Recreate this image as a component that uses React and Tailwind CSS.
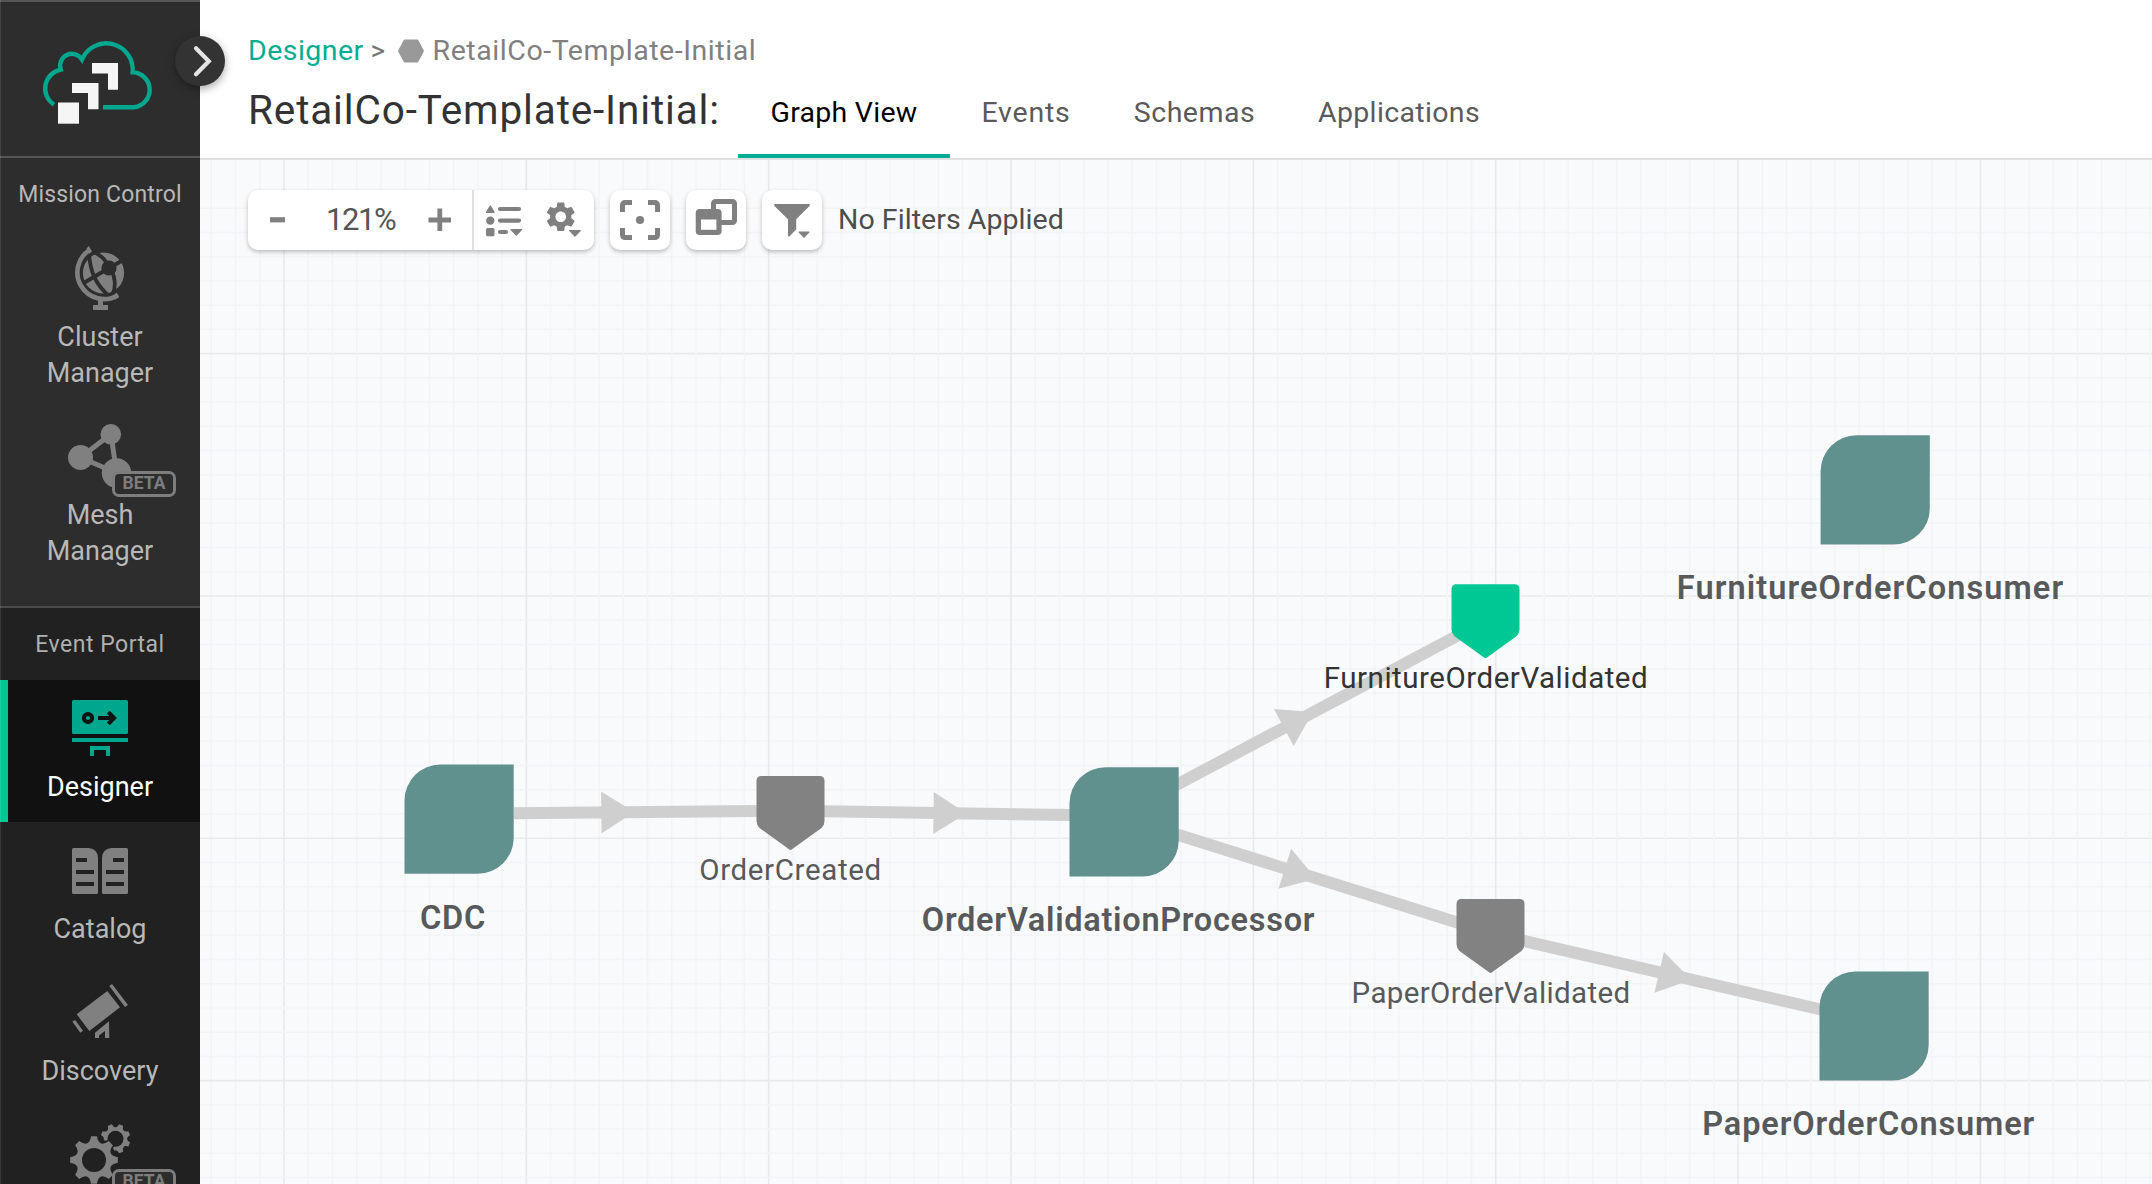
import { MdSettings } from 'react-icons/md';

/* ---------- helpers ---------- */

function gearPath(cx, cy, teeth, outer, control, half, offset = 0) {
  const pt = (a, r) => `${(cx + r * Math.sin(a)).toFixed(2)} ${(cy - r * Math.cos(a)).toFixed(2)}`;
  const step = (2 * Math.PI) / teeth;
  let d = `M${pt(offset - half, outer)}`;
  for (let i = 0; i < teeth; i++) {
    const a = offset + i * step;
    d += ` L${pt(a + half, outer)} Q${pt(a + step / 2, control)} ${pt(a + step - half, outer)}`;
  }
  return d + 'Z';
}

/* ---------- sidebar icons ---------- */

function CloudLogo() {
  return (
    <svg className="h-[90px] w-[116px]" viewBox="40 38 116 90" fill="none">
      <path
        d="M54 104.6 A19.2 19.2 0 0 1 60.8 69.6 A11.8 11.8 0 0 1 82 59.5 A26.4 26.4 0 0 1 132.6 72.3 A17.5 17.5 0 0 1 134 107.2 H103"
        stroke="#00a78f"
        strokeWidth="4.4"
      />
      <g fill="#f5f5f5">
        <path d="M92 63H118V89.7H108V73.5H92Z" />
        <path d="M72 83H98.5V109.3H88V93H72Z" />
        <path d="M58 102.5H79V123.7H58Z" />
      </g>
    </svg>
  );
}

function GlobeIcon() {
  return (
    <svg className="-my-[4px] h-[64px] w-[56px]" viewBox="72 246 56 64" fill="none">
      <circle cx="103.5" cy="273" r="20.6" fill="#808080" />
      <g stroke="#2d2d2d" strokeWidth="3.8">
        <path d="M89 253C90 272 96 285 110 297" />
        <path d="M109 268L82 284" />
        <path d="M109 268L126 258.5" />
        <path d="M109 268C106 259 101 256 94 252" />
        <path d="M111 269C116 279 116 288 112 296" />
      </g>
      <circle cx="109" cy="268" r="7.6" fill="#2d2d2d" />
      <path d="M90.2 249.6A26.6 26.6 0 1 0 118 295.2" stroke="#808080" strokeWidth="4.6" />
      <path d="M86.5 248.5L88.8 246L92 251.5L89 254Z M116.5 292.5L119 296.5L115.5 299.5L113.5 296Z" fill="#808080" />
      <path d="M98 299H103V305H108V310H93V305H98Z" fill="#808080" />
    </svg>
  );
}

function MeshIcon() {
  return (
    <svg className="-mx-1 -my-[4px] h-[64px] w-[64px]" viewBox="68 424 64 64">
      <path d="M80.5 457.5L111 434L116.5 473Z" fill="none" stroke="#808080" strokeWidth="5" />
      <g fill="#808080">
        <circle cx="80.5" cy="457.5" r="12.5" />
        <circle cx="110.8" cy="434.3" r="10.3" />
        <circle cx="116.5" cy="473" r="14.7" />
      </g>
    </svg>
  );
}

function DesignerIcon() {
  return (
    <svg className="h-14 w-14" viewBox="72 700 56 56" fill="none">
      <rect x="72" y="700" width="56" height="34" rx="1.6" fill="#00a78f" />
      <path d="M72 738H128V742H72Z" fill="#00a78f" />
      <path d="M92 756V748H108V756" stroke="#00a78f" strokeWidth="4" />
      <g stroke="#111111" strokeWidth="4">
        <circle cx="88" cy="718" r="4.1" />
        <path d="M98 718H114 M108.3 712.2L114.1 718L108.3 723.8" />
      </g>
    </svg>
  );
}

function CatalogIcon() {
  return (
    <svg className="h-14 w-14" viewBox="72 842 56 56">
      <g fill="#808080">
        <path d="M73.5 848H88.5Q98 849 98 858V892.5Q98 894 96.5 894H73.5Q72 894 72 892.5V849.5Q72 848 73.5 848Z" />
        <path d="M126.5 848H111.5Q102 849 102 858V892.5Q102 894 103.5 894H126.5Q128 894 128 892.5V849.5Q128 848 126.5 848Z" />
      </g>
      <path
        d="M76 858H87V862H76Z M76 870H94V874H76Z M76 882H94V886H76Z M113 858H124V862H113Z M106 870H124V874H106Z M106 882H124V886H106Z"
        fill="#212121"
      />
    </svg>
  );
}

function TelescopeIcon() {
  return (
    <svg className="h-14 w-14" viewBox="72 984 56 56" fill="#808080">
      <path d="M107.3 991L120 1007.3L89.3 1031L76.7 1014.3Z" />
      <path d="M109.3 986L112 984L128 1005L125 1007Z" />
      <path d="M72.3 1021.5L75.2 1020L83 1030.7L80.3 1032.7Z" />
      <path d="M95 1032.7L109 1021.3L109.3 1038H105V1031L99 1035.5V1038H95Z" />
    </svg>
  );
}

function GearsIcon() {
  return (
    <svg className="-mx-1 -my-[4px] h-[64px] w-[64px]" viewBox="68 1122 64 64">
      <path d={gearPath(115.5, 1138.8, 8, 15, 8.5, 0.14, 0.39)} fill="#808080" />
      <circle cx="115.5" cy="1138.8" r="8" fill="#212121" />
      <circle cx="94" cy="1160" r="22.5" fill="#212121" />
      <path d={gearPath(94, 1160, 8, 25.5, 12, 0.12)} fill="#212121" stroke="#212121" strokeWidth="3" />
      <path d={gearPath(94, 1160, 8, 24, 13, 0.12)} fill="#808080" />
      <circle cx="94" cy="1160" r="12" fill="#212121" />
    </svg>
  );
}

/* ---------- sidebar ---------- */

function BetaBadge() {
  return (
    <span className="absolute top-[43px] left-[40px] flex h-[26px] w-[64px] items-center justify-center rounded-[7px] border-[3px] border-[#7d7d7d] bg-[#2d2d2d] text-[17.5px] font-bold leading-none text-[#7d7d7d]">
      BETA
    </span>
  );
}

function NavItem({ icon, lines, active, beta }) {
  return (
    <a
      className={
        active
          ? 'flex flex-col items-center border-l-8 border-[#00c895] bg-[#111111] pt-5 pr-2 pb-[17px] text-white'
          : 'flex flex-col items-center pt-5 pb-[17px] text-[#b8b8b8]'
      }
    >
      <span className="relative mb-[13px] flex h-14 w-14 items-center justify-center">
        {icon}
        {beta && <BetaBadge />}
      </span>
      {lines.map((line) => (
        <span key={line} className="text-[27px] leading-9">
          {line}
        </span>
      ))}
    </a>
  );
}

function Sidebar() {
  return (
    <aside className="relative flex w-[200px] shrink-0 flex-col bg-[#212121]">
      <div className="flex h-[158px] shrink-0 border-y-2 border-[#555555] bg-[#2d2d2d] pt-9 pl-10">
        <CloudLogo />
      </div>
      <section className="shrink-0 border-b-2 border-[#4b4b4b] bg-[#2d2d2d] pb-5">
        <h2 className="flex h-[72px] items-center justify-center pt-[2px] text-[23px] tracking-[0.15px] text-[#b8b8b8]">Mission Control</h2>
        <NavItem icon={<GlobeIcon />} lines={['Cluster', 'Manager']} />
        <NavItem icon={<MeshIcon />} lines={['Mesh', 'Manager']} beta />
      </section>
      <section className="shrink-0">
        <h2 className="flex h-[72px] items-center justify-center pt-[2px] text-[23px] tracking-[0.5px] text-[#b0b0b0]">Event Portal</h2>
        <NavItem icon={<DesignerIcon />} lines={['Designer']} active />
        <NavItem icon={<CatalogIcon />} lines={['Catalog']} />
        <NavItem icon={<TelescopeIcon />} lines={['Discovery']} />
        <NavItem icon={<GearsIcon />} lines={[]} beta />
      </section>
      <div className="absolute inset-y-0 left-0 w-px bg-white/10" />
      <button className="absolute top-9 left-[175px] z-20 flex h-[50px] w-[50px] items-center justify-center rounded-full bg-[#333333] shadow-[0_3px_8px_rgba(0,0,0,0.35)]">
        <svg className="h-[50px] w-[50px]" viewBox="175 36 50 50" fill="none">
          <path d="M196 48.3L208.8 61.2L196 74.2" stroke="#e4e4e4" strokeWidth="4.2" strokeLinecap="round" />
        </svg>
      </button>
    </aside>
  );
}

/* ---------- header ---------- */

function Header() {
  return (
    <header className="flex h-[160px] shrink-0 flex-col border-b-2 border-[#e2e2e2] bg-white pt-[33px] pl-[248px] -ml-[200px]">
      <div className="flex h-[35px] items-center text-[28.5px] leading-9">
        <span className="tracking-[0.45px] text-[#00ad93]">Designer</span>
        <span className="ml-[7px] w-[18px] text-[28px] text-[#777777]">&gt;</span>
        <svg className="ml-[9px] h-6 w-[26px]" viewBox="0 0 26 24">
          <path d="M7 0.5H19Q20 0.5 20.5 1.4L25.6 11Q26 12 25.6 13L20.5 22.6Q20 23.5 19 23.5H7Q6 23.5 5.5 22.6L0.4 13Q0 12 0.4 11L5.5 1.4Q6 0.5 7 0.5Z" fill="#999999" />
        </svg>
        <span className="ml-[9px] tracking-[0.56px] text-[#808080]">RetailCo-Template-Initial</span>
      </div>
      <div className="flex h-[90px]">
        <h1 className="mt-[-5px] flex w-[490px] items-center text-[40.5px] tracking-[0.85px] whitespace-nowrap text-[#333333]">RetailCo-Template-Initial:</h1>
        <nav className="flex text-[28.5px] leading-[90px] text-[#5a5a5a]">
          <a className="h-[90px] w-[212px] border-b-4 border-[#00ad93] text-center tracking-[0.25px] text-black">Graph View</a>
          <a className="w-[152px] text-center tracking-[0.8px]">Events</a>
          <a className="w-[185px] text-center tracking-[0.5px]">Schemas</a>
          <a className="w-[224px] text-center tracking-[0.35px]">Applications</a>
        </nav>
      </div>
    </header>
  );
}

/* ---------- toolbar ---------- */

const cardShadow = 'shadow-[0_2px_4px_rgba(0,0,0,0.25)]';

function ToolButton({ children }) {
  return <button className={`flex h-[60px] w-[60px] items-center justify-center rounded-[10px] bg-white ${cardShadow}`}>{children}</button>;
}

function Toolbar() {
  return (
    <div className="relative z-10 flex h-[60px] items-center gap-4">
      <div className={`flex h-[60px] w-[346px] rounded-[10px] bg-white ${cardShadow}`}>
        <div className="flex w-[226px] items-center border-r-2 border-[#e0e0e0] pl-[22px]">
          <svg className="h-6 w-[15px]" viewBox="0 0 15 24">
            <path d="M0 9.2H15V14.4H0Z" fill="#808080" />
          </svg>
          <span className="ml-[41px] w-[74px] text-[31px] leading-10 tracking-[-1.4px] text-[#555555]">121%</span>
          <svg className="ml-[28px] h-6 w-6" viewBox="0 0 24 24">
            <path d="M9.4 0.5H14.2V9.6H23V14.4H14.2V23H9.4V14.4H0.5V9.6H9.4Z" fill="#808080" />
          </svg>
        </div>
        <svg className="h-[60px] w-[54px]" viewBox="474 190 54 60" fill="#808080">
          <path d="M490.3 206L494 212.4H486.6Z" stroke="#808080" strokeWidth="1.4" strokeLinejoin="round" />
          <circle cx="490.3" cy="220.6" r="4.2" />
          <rect x="486" y="228" width="8.5" height="8.3" rx="1.6" />
          <path d="M500 209H519 M500 220.6H519 M500 232H506" stroke="#808080" strokeWidth="4.2" strokeLinecap="round" />
          <path d="M511 229.5H521.6L516.3 235.2Z" stroke="#808080" strokeWidth="1.2" strokeLinejoin="round" />
        </svg>
        <div className="relative h-[60px] w-[64px] text-[#808080]">
          <MdSettings className="mt-[9px] ml-[15px] h-[35.5px] w-[35.5px]" />
          <svg className="absolute top-[39px] left-[40px] h-[9px] w-[14px]" viewBox="0 0 14 9" fill="#808080">
            <path d="M1.7 1.5H12.3L7 7.2Z" stroke="#808080" strokeWidth="1.2" strokeLinejoin="round" />
          </svg>
        </div>
      </div>
      <ToolButton>
        <svg className="h-10 w-10" viewBox="0 0 40 40" fill="none">
          <path d="M2.5 12V5.5Q2.5 2.5 5.5 2.5H12 M28 2.5H34.5Q37.5 2.5 37.5 5.5V12 M37.5 28V34.5Q37.5 37.5 34.5 37.5H28 M12 37.5H5.5Q2.5 37.5 2.5 34.5V28" stroke="#808080" strokeWidth="5" />
          <circle cx="20" cy="20" r="4.1" fill="#808080" />
        </svg>
      </ToolButton>
      <ToolButton>
        <svg className="h-[60px] w-[60px]" viewBox="686 190 60 60" fill="none">
          <rect x="713.5" y="201.5" width="21" height="21" rx="2" stroke="#808080" strokeWidth="5" />
          <rect x="695.7" y="209" width="25.9" height="26" rx="4" fill="#808080" />
          <rect x="701" y="219.5" width="15.4" height="10.3" fill="#ffffff" />
        </svg>
      </ToolButton>
      <ToolButton>
        <svg className="h-[60px] w-[60px]" viewBox="762 190 60 60" fill="#808080">
          <path d="M775.5 204H808.5Q811 204.3 809.3 206.2L796.2 219.3V229.5L789.5 236.2Q788 237 788 235.5V219.3L774.7 206.2Q773 204.3 775.5 204Z" />
          <path d="M799 232H809L804 237.2Z" stroke="#808080" strokeWidth="1.2" strokeLinejoin="round" />
        </svg>
      </ToolButton>
      <span className="pt-px text-[28.5px] tracking-[0.06px] text-[#4d4d4d]">No Filters Applied</span>
    </div>
  );
}

/* ---------- graph ---------- */

const EDGES = [
  [514, 813.2, 757, 811],
  [824, 811.3, 1070, 815],
  [1165, 791, 1470, 629],
  [1165, 830.8, 1470, 926.4],
  [1515, 938.9, 1825, 1010.5],
];

const ARROWS = [
  [601.3, 812.4, -0.5],
  [933.5, 813, 0.9],
  [1283.8, 727.5, -28],
  [1284.8, 868.8, 17.4],
  [1659.2, 972.4, 13],
];

const APPS = [
  { x: 404.5, y: 764.5, label: 'CDC', cx: 453, base: 929, track: 0.7 },
  { x: 1069.5, y: 767.2, label: 'OrderValidationProcessor', cx: 1118.5, base: 930.5, track: 0.72 },
  { x: 1820.6, y: 435.2, label: 'FurnitureOrderConsumer', cx: 1870.5, base: 599, track: 1.1 },
  { x: 1819.5, y: 971.4, label: 'PaperOrderConsumer', cx: 1868.7, base: 1135, track: 0.88 },
];

const EVENTS = [
  { x: 756.5, y: 776, label: 'OrderCreated', cx: 790.5, base: 880, track: 0.65, fill: '#828282', color: '#58595b' },
  { x: 1451.5, y: 584.2, label: 'FurnitureOrderValidated', cx: 1486, base: 688, track: 0.52, fill: '#00c895', color: '#333333' },
  { x: 1456.5, y: 899, label: 'PaperOrderValidated', cx: 1491, base: 1003, track: 0.35, fill: '#828282', color: '#58595b' },
];

const MINOR = Array.from({ length: 90 }, (_, i) => i - 6);

function Graph() {
  const step = 24.235;
  return (
    <div className="absolute inset-0">
      <svg className="h-[1024px] w-[1952px]" viewBox="200 160 1952 1024">
        {MINOR.map((i) => (
          <g key={i} stroke={i % 10 === 0 ? '#e7e9eb' : '#f3f4f6'} strokeWidth={i % 10 === 0 ? 1.6 : 1.5}>
            <path d={`M${(284 + i * step).toFixed(2)} 160V1184`} />
            <path d={`M200 ${(353.6 + i * step).toFixed(2)}H2152`} />
          </g>
        ))}
        {EDGES.map(([x1, y1, x2, y2]) => (
          <line key={x1 + y1} x1={x1} y1={y1} x2={x2} y2={y2} stroke="#cfcfcf" strokeWidth="12" />
        ))}
        {ARROWS.map(([x, y, a]) => (
          <path key={x} d="M0 -21L33 0L0 21Z" transform={`translate(${x} ${y}) rotate(${a})`} fill="#cfcfcf" />
        ))}
        {APPS.map((n) => (
          <path key={n.label} d="M36 0H109.2V73.2A36 36 0 0 1 73.2 109.2H0V36A36 36 0 0 1 36 0Z" transform={`translate(${n.x} ${n.y})`} fill="#61918f" />
        ))}
        {EVENTS.map((n) => (
          <path
            key={n.label}
            d="M5 0H63Q68 0 68 5V45Q68 49 65 52L35.5 73.2Q34 74.6 32.5 73.2L3 52Q0 49 0 45V5Q0 0 5 0Z"
            transform={`translate(${n.x} ${n.y})`}
            fill={n.fill}
          />
        ))}
      </svg>
      {APPS.map((n) => (
        <span
          key={n.label}
          className="absolute -translate-x-1/2 text-[32.5px] leading-10 font-semibold whitespace-nowrap text-[#58595b]"
          style={{ left: n.cx - 200, top: n.base - 191, letterSpacing: n.track }}
        >
          {n.label}
        </span>
      ))}
      {EVENTS.map((n) => (
        <span
          key={n.label}
          className="absolute -translate-x-1/2 text-[29.5px] leading-10 whitespace-nowrap"
          style={{ left: n.cx - 200, top: n.base - 190, letterSpacing: n.track, color: n.color }}
        >
          {n.label}
        </span>
      ))}
    </div>
  );
}

export default function App() {
  return (
    <div className="h-[1184px] w-[2152px] overflow-hidden font-[Roboto,sans-serif] antialiased">
      <div className="flex h-full font-[number:450]">
        <div className="z-10 flex">
          <Sidebar />
        </div>
        <div className="flex min-w-0 flex-1 flex-col">
          <Header />
          <main className="relative flex-1 overflow-hidden bg-[#f8fafc] pt-[30px] pl-12">
            <Graph />
            <Toolbar />
          </main>
        </div>
      </div>
    </div>
  );
}
